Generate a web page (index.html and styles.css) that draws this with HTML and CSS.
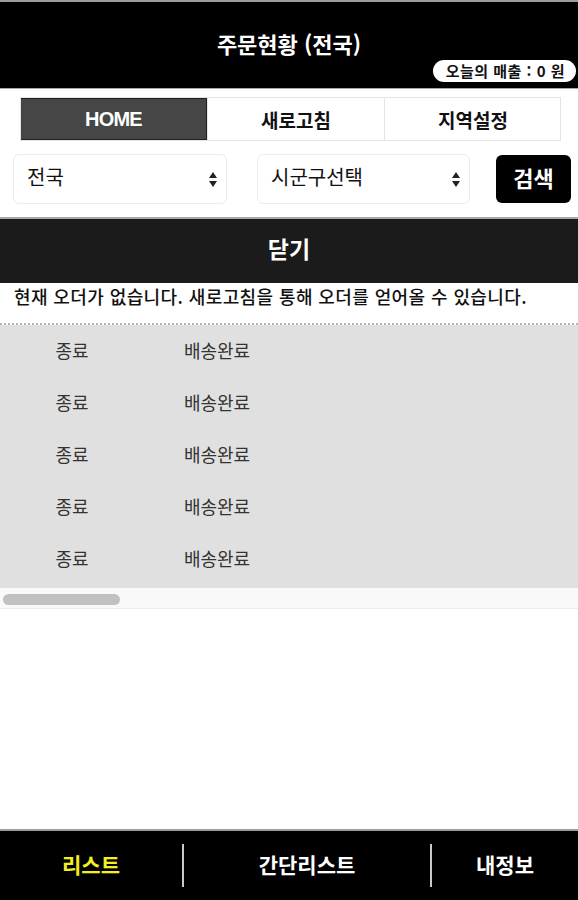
FILE: index.html
```html
<!DOCTYPE html>
<html lang="ko">
<head>
    <meta charset="UTF-8">
    <meta name="viewport" content="width=device-width, initial-scale=1.0">
    <title>주문현황</title>
    <link rel="stylesheet" href="styles.css">
</head>
<body>
<div class="page">
    <!-- Header -->
    <header class="header">
        <h1 class="header__title">주문현황 (전국)</h1>
        <div class="header__sales">오늘의 매출 : 0 원</div>
    </header>

    <!-- Tabs -->
    <nav class="tabs">
        <a href="#" class="tabs__item tabs__item--active">HOME</a>
        <a href="#" class="tabs__item">새로고침</a>
        <a href="#" class="tabs__item">지역설정</a>
    </nav>

    <!-- Search -->
    <div class="search">
        <div class="select select--sido">
            <span>전국</span>
            <svg class="select__arrow" width="8" height="15" viewBox="0 0 8 15">
                <path d="M4 0 L8 6 L0 6 Z" fill="#222"/>
                <path d="M0 9 L8 9 L4 15 Z" fill="#222"/>
            </svg>
        </div>
        <div class="select select--gugun">
            <span>시군구선택</span>
            <svg class="select__arrow" width="8" height="15" viewBox="0 0 8 15">
                <path d="M4 0 L8 6 L0 6 Z" fill="#222"/>
                <path d="M0 9 L8 9 L4 15 Z" fill="#222"/>
            </svg>
        </div>
        <button class="search__btn" type="button">검색</button>
    </div>

    <!-- Close bar -->
    <div class="close-bar">닫기</div>

    <p class="notice">현재 오더가 없습니다. 새로고침을 통해 오더를 얻어올 수 있습니다.</p>

    <!-- Order list -->
    <div class="list">
        <div class="list__row"><span>종료</span><span>배송완료</span><span></span></div>
        <div class="list__row"><span>종료</span><span>배송완료</span><span></span></div>
        <div class="list__row"><span>종료</span><span>배송완료</span><span></span></div>
        <div class="list__row"><span>종료</span><span>배송완료</span><span></span></div>
        <div class="list__row"><span>종료</span><span>배송완료</span><span></span></div>
    </div>
    <div class="scrollbar"><div class="scrollbar__thumb"></div></div>

    <!-- Bottom menu -->
    <footer class="menu">
        <a href="#" class="menu__item menu__item--list menu__item--active">리스트</a>
        <a href="#" class="menu__item menu__item--simple">간단리스트</a>
        <a href="#" class="menu__item menu__item--info">내정보</a>
    </footer>
</div>
</body>
</html>
```

FILE: styles.css
```css
:root {
    /* COLORS */
    --black: #000;
    --dark: #1b1b1b;
    --tab-dark: #464646;
    --line: #a8a8a8;
    --light: #e0e0e0;
    --yellow: #f3ef22;

    font-size: 16px;
    font-family: "Noto Sans CJK KR", "Noto Sans", sans-serif;
}

* {
    box-sizing: border-box;
}

body {
    margin: 0;
    background-color: #fff;
    color: #111;
}

a {
    text-decoration: none;
    color: inherit;
}

.page {
    display: flex;
    flex-direction: column;
    min-height: 100vh;
}

/* HEADER */
.header {
    background-color: var(--black);
    border-top: 2px solid #9c9c9c;
    border-bottom: 1px solid var(--line);
    display: flex;
    flex-direction: column;
    align-items: center;
    padding: 28px 2px 6px;
}

.header__title {
    color: #fff;
    font-size: 22px;
    font-weight: 700;
    line-height: 26px;
    margin: 0 0 4px;
}

.header__sales {
    align-self: flex-end;
    background-color: #fff;
    border-radius: 11px;
    color: #111;
    font-size: 15px;
    font-weight: 700;
    letter-spacing: 0.5px;
    height: 22px;
    line-height: 22px;
    padding: 0 11px 0 13px;
}

/* TABS */
.tabs {
    display: grid;
    grid-template-columns: 186px 177px 177px;
    margin: 8px 0 0 20px;
    height: 44px;
    border: 1px solid #e4e4e4;
    width: 541px;
}

.tabs__item {
    display: flex;
    align-items: center;
    justify-content: center;
    font-size: 19px;
    font-weight: 700;
    border-left: 1px solid #e4e4e4;
}

.tabs__item:first-child {
    border-left: none;
}

.tabs__item--active {
    background-color: var(--tab-dark);
    color: #fff;
    font-family: "Liberation Sans", "Noto Sans CJK KR", sans-serif;
    font-size: 20px;
    letter-spacing: -0.8px;
    border: 1px solid #222;
}

/* SEARCH */
.search {
    display: flex;
    align-items: center;
    padding: 0 7px 0 13px;
    margin-top: 12px;
    height: 51px;
}

.select {
    display: flex;
    align-items: center;
    justify-content: space-between;
    height: 50px;
    border: 1px solid #ececec;
    border-radius: 6px;
    background-color: #fff;
    font-size: 20px;
    padding: 0 9px 4px 13px;
}

.select--sido {
    width: 214px;
}

.select--gugun {
    width: 213px;
    margin-left: 30px;
}

.select__arrow {
    margin-top: 5px;
}

.search__btn {
    margin-left: 26px;
    width: 75px;
    height: 48px;
    background-color: var(--black);
    border: none;
    border-radius: 6px;
    color: #fff;
    font-family: inherit;
    font-size: 22px;
    font-weight: 700;
    padding: 0 0 3px;
}

/* CLOSE BAR */
.close-bar {
    margin-top: 13px;
    border-top: 2px solid var(--line);
    background-color: var(--dark);
    color: #fff;
    height: 66px;
    display: flex;
    align-items: center;
    justify-content: center;
    font-size: 23px;
    font-weight: 700;
    padding-bottom: 6px;
}

.notice {
    margin: 0;
    padding: 0 0 0 14px;
    height: 42px;
    line-height: 27px;
    font-size: 18px;
    font-weight: 500;
    color: #111;
    letter-spacing: 0.4px;
    white-space: nowrap;
    border-bottom: 2px dotted #b5b5b5;
}

/* LIST */
.list {
    background-color: var(--light);
    padding-bottom: 3px;
}

.list__row {
    display: grid;
    grid-template-columns: 144px 146px 1fr;
    height: 52px;
    align-items: center;
    font-size: 18px;
    color: #333;
    text-align: center;
    padding-bottom: 2px;
}

.scrollbar {
    height: 21px;
    background-color: #f9f9f9;
    border-bottom: 1px solid #ececec;
    padding: 6px 0 0 3px;
}

.scrollbar__thumb {
    width: 117px;
    height: 11px;
    border-radius: 6px;
    background-color: #c1c1c1;
}

/* BOTTOM MENU */
.menu {
    margin-top: auto;
    background-color: var(--black);
    border-top: 2px solid #9c9c9c;
    height: 71px;
    display: flex;
    align-items: center;
}

.menu__item {
    display: flex;
    align-items: center;
    justify-content: center;
    color: #fff;
    font-size: 21px;
    font-weight: 700;
    height: 43px;
    padding-bottom: 3px;
}

.menu__item--list {
    width: 184px;
    border-right: 2px solid #c8c8c8;
}

.menu__item--simple {
    width: 248px;
    border-right: 2px solid #c8c8c8;
}

.menu__item--info {
    flex: 1;
}

.menu__item--active {
    color: var(--yellow);
}
```
